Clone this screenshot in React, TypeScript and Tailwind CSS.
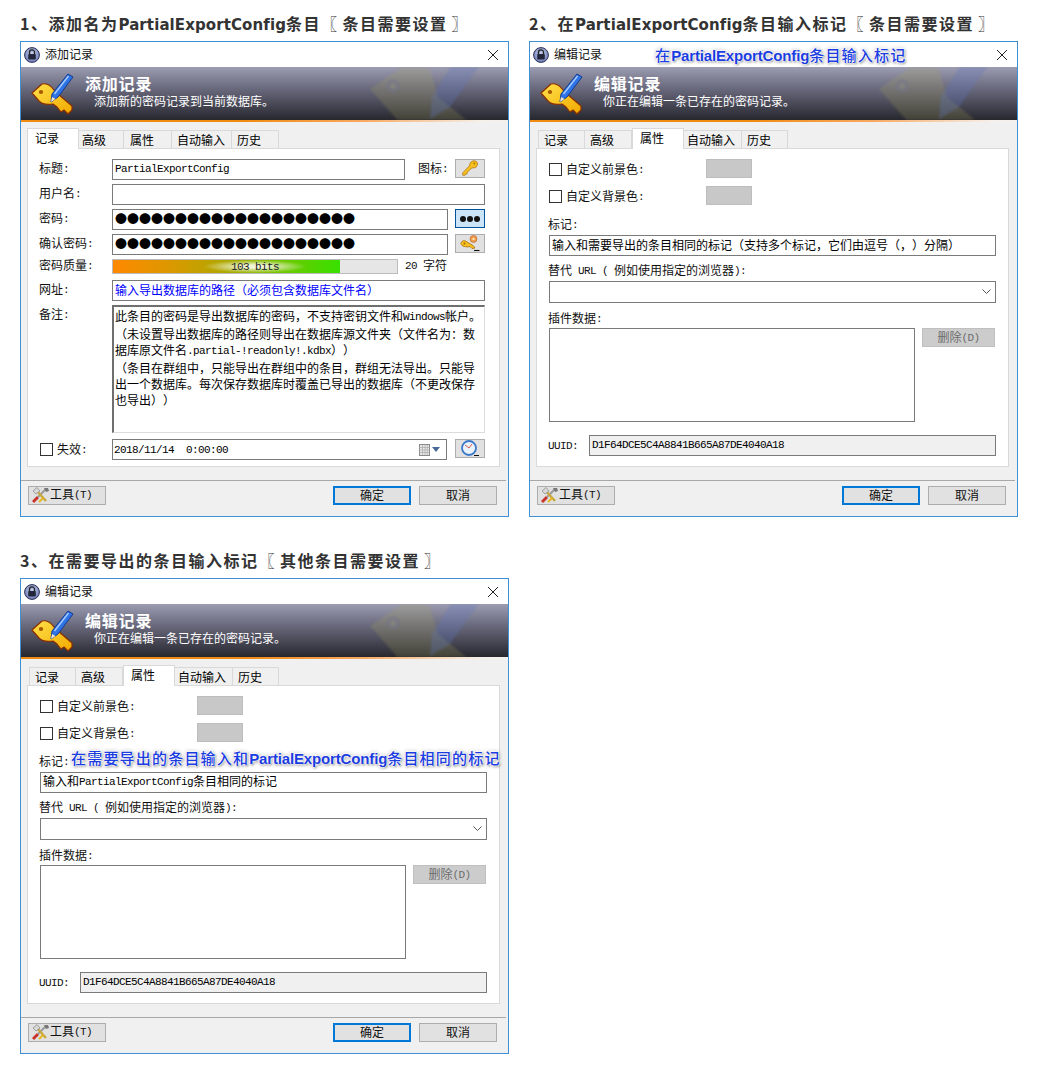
import React from "react";

const CJK = "font-['Noto_Sans_CJK_SC',sans-serif] [text-spacing-trim:space-all]";

function T({ text }: { text: string }) {
  const parts = text.split(/([\x20-\x7e]+)/).filter(Boolean);
  return (
    <span>
      {parts.map((p, i) =>
        /^[\x20-\x7e]+$/.test(p) ? (
          <span key={i} className="relative top-[-1px] font-['Liberation_Mono',monospace] text-[11px] tracking-[-0.6px] whitespace-pre">
            {p}
          </span>
        ) : (
          <span key={i}>{p}</span>
        )
      )}
    </span>
  );
}

function KeyPen() {
  return (
    <svg width={44} height={42} viewBox="0 0 44 42" className="shrink-0">
      <defs>
        <linearGradient id="ky" x1="0" y1="0" x2="1" y2="1">
          <stop offset="0" stopColor="#ffe14a" />
          <stop offset="1" stopColor="#f2a900" />
        </linearGradient>
      </defs>
      <path
        d="M1 20 L11 11 C15 10 20 12 23 17 L27 21 L41 33 L41 37 L37 41 L33 37 L30 39 L26 34 L22 31 C16 32 11 31 8 28 Z"
        fill="url(#ky)"
        stroke="#8a2f00"
        strokeWidth="1.2"
        strokeLinejoin="round"
      />
      <ellipse cx="10" cy="19" rx="2.2" ry="2" fill="#a85a00" />
      <path d="M37 1 L42 4 L27 24 L20 29 L21 21 Z" fill="#2f74e6" stroke="#123a90" strokeWidth="1" strokeLinejoin="round" />
      <path d="M37.5 3 L23.5 21" stroke="#a8ccff" strokeWidth="1.4" />
      <path d="M21 24 L20 29 L24.5 26 Z" fill="#f4e6c8" />
    </svg>
  );
}

function Watermark() {
  return (
    <svg width="139" height="53" viewBox="0 0 139 53" className="absolute left-[349px] top-0 blur-[1px]">
      <path d="M0 22 L38 -4 L60 2 L68 30 L100 56 L30 56 Z" fill="#a9a558" fillOpacity="0.22" />
      <circle cx="23" cy="19" r="6.5" fill="#74748e" fillOpacity="0.5" />
      <circle cx="23" cy="19" r="3" fill="#8f8d78" fillOpacity="0.5" />
      <path d="M82 -2 L110 -2 L80 40 L60 52 L62 30 Z" fill="#5f78bc" fillOpacity="0.3" />
    </svg>
  );
}

function LockIcon() {
  return (
    <svg width="16" height="16" viewBox="0 0 16 16" className="shrink-0">
      <defs>
        <radialGradient id="lk" cx="0.5" cy="0.4" r="0.7">
          <stop offset="0" stopColor="#c6d0ee" />
          <stop offset="1" stopColor="#5d6ea8" />
        </radialGradient>
      </defs>
      <circle cx="8" cy="8" r="7.4" fill="url(#lk)" stroke="#2a2f55" />
      <path d="M5.5 7 V5.4 a2.5 2.5 0 0 1 5 0 V7" fill="none" stroke="#222" strokeWidth="1.3" />
      <rect x="4.2" y="7" width="7.6" height="5.4" rx="0.8" fill="#23253a" />
    </svg>
  );
}

function SmallKey() {
  return (
    <svg width="16" height="16" viewBox="0 0 16 16">
      <path
        d="M15.5 4 C15.5 6.5 13.5 8 11 8 L10 7.8 L5 12.5 L5 14 L3.5 14 L2.5 15.5 L0.5 15 L1 12.5 L7.5 5.8 C7.5 3 9.5 0.8 12 0.8 C14 0.8 15.5 2 15.5 4 Z"
        fill="#f7c01e"
        stroke="#a86c0a"
        strokeWidth="0.7"
      />
      <circle cx="12.3" cy="3.6" r="1" fill="#b87a10" />
    </svg>
  );
}

function GenKey() {
  return (
    <svg width="20" height="17" viewBox="0 0 20 17">
      <path d="M1 8.5 C1 6.5 3 5 5.5 6 L13 10.5 L15 13 L12 13.5 L10 11.5 C7 12.5 1 11.5 1 8.5 Z" fill="#f7c01e" stroke="#a86c0a" strokeWidth="0.8" />
      <circle cx="4.5" cy="8.5" r="1" fill="#a86c0a" />
      <circle cx="13.5" cy="4" r="3.4" fill="#f0a050" stroke="#c06a30" strokeWidth="0.8" />
      <circle cx="13.5" cy="4" r="1.1" fill="#fff2c8" />
      <path d="M14 15.5 H19.5" stroke="#111" strokeWidth="1.1" />
    </svg>
  );
}

function ClockIcon() {
  return (
    <svg width="20" height="17" viewBox="0 0 20 17">
      <circle cx="9" cy="8" r="7" fill="#eaf2fc" stroke="#3c78c8" strokeWidth="1.8" />
      <path d="M9 8 L5 5 M9 8 L12 4" stroke="#d04a3c" strokeWidth="0.9" />
      <path d="M14 15.5 H19" stroke="#111" strokeWidth="1" />
    </svg>
  );
}

function ToolIcon() {
  return (
    <svg width="18" height="17" viewBox="0 0 18 17" className="shrink-0">
      <path d="M1 15 L6 10" stroke="#c8342c" strokeWidth="3" />
      <path d="M6 10 L14 2" stroke="#9a9a9a" strokeWidth="2" />
      <path d="M12 1 L16 1 L17 4 L14 5 Z" fill="#777" />
      <path d="M4 3 L14 14" stroke="#c8a83c" strokeWidth="2.4" />
      <path d="M1 4 L5 0.5 L8 4 L4 7 Z" fill="#d8d8d8" stroke="#777" strokeWidth="0.6" />
      <path d="M7 15 L11 11" stroke="#e6b820" strokeWidth="2" />
    </svg>
  );
}

function CalendarIcon() {
  return (
    <span className="flex items-center gap-[2px]">
      <svg width="11" height="12" viewBox="0 0 11 12">
        <rect x="0.5" y="0.5" width="10" height="11" fill="#e8e8e8" stroke="#8a8a8a" />
        <path d="M0.5 3.5 H10.5 M0.5 6 H10.5 M0.5 8.5 H10.5 M3.5 1 V11 M6 1 V11 M8.3 1 V11" stroke="#a9a9a9" strokeWidth="0.7" />
      </svg>
      <svg width="8" height="5" viewBox="0 0 8 5">
        <path d="M0 0 H8 L4 5 Z" fill="#4a6a96" />
      </svg>
    </span>
  );
}

function Btn({ children, className = "" }: { children: React.ReactNode; className?: string }) {
  return (
    <div className={`flex items-center justify-center h-[19px] border border-[#adadad] bg-[#e1e1e1] text-[12px] text-[#111] ${className}`}>
      {children}
    </div>
  );
}

function Input({ className = "", children }: { className?: string; children?: React.ReactNode }) {
  return (
    <div className={`flex items-center h-[21px] border border-[#7a7a7a] bg-white px-[2px] pb-[2px] text-[12px] whitespace-pre overflow-hidden ${className}`}>
      {children}
    </div>
  );
}

function Tabs({ active, widths, pads, ml }: { active: number; widths: number[]; pads: number[]; ml: number }) {
  const names = ["记录", "高级", "属性", "自动输入", "历史"];
  return (
    <div style={{ marginLeft: ml }} className="flex items-end h-[21px] relative z-10">
      {names.map((n, i) => (
        <div
          key={n}
          style={{ width: widths[i], paddingLeft: pads[i] }}
          className={
            i === active
              ? "h-[21px] bg-white border border-b-0 border-[#d9d9d9] text-[12px] leading-[18px] text-black shrink-0"
              : "h-[19px] bg-[#f0f0f0] border border-l-0 first:border-l border-[#d9d9d9] text-[12px] leading-[18px] text-black shrink-0"
          }
        >
          {n}
        </div>
      ))}
    </div>
  );
}

function Row({ label, children }: { label: string; children: React.ReactNode }) {
  return (
    <div className="flex items-center h-[21px] mb-[4px]">
      <div className="w-[73px] shrink-0 pb-[2px] text-[12px] text-[#111]">
        <T text={label} />
      </div>
      {children}
    </div>
  );
}

const DOTS = "●".repeat(20);

function EntryPanel() {
  return (
    <div className="pt-[10px] pl-[11px] pr-[14px]">
      <Row label="标题:">
        <Input className="w-[293px] text-black">
          <T text="PartialExportConfig" />
        </Input>
        <span className="ml-[13px] w-[37px] pb-[2px] text-[12px] text-[#111]">
          <T text="图标:" />
        </span>
        <Btn className="w-[30px] -mt-[3px]">
          <SmallKey />
        </Btn>
      </Row>
      <Row label="用户名:">
        <Input className="w-[373px]" />
      </Row>
      <Row label="密码:">
        <Input className="w-[336px] text-black leading-none">{DOTS}</Input>
        <Btn className="w-[30px] ml-[7px] -mt-[2px] gap-[1px] !bg-[#cce4f7] !border-[#005499]">
          <span className="w-[6px] h-[6px] rounded-full bg-[#111]" />
          <span className="w-[6px] h-[6px] rounded-full bg-[#111]" />
          <span className="w-[6px] h-[6px] rounded-full bg-[#111]" />
        </Btn>
      </Row>
      <Row label="确认密码:">
        <Input className="w-[336px] text-black leading-none">{DOTS}</Input>
        <Btn className="w-[30px] ml-[7px] -mt-[2px]">
          <GenKey />
        </Btn>
      </Row>
      <div className="flex items-center h-[15px] mb-[6px]">
        <div className="w-[73px] shrink-0 pb-[2px] text-[12px] text-[#111]">
          <T text="密码质量:" />
        </div>
        <div className="relative w-[286px] h-[15px] border border-[#bcbcbc] bg-[#e6e6e6]">
          <div className="h-full w-[227px] bg-[linear-gradient(90deg,#ff8800_0%,#dc9800_25%,#aea800_50%,#6fc800_75%,#38e000_100%)]" />
          <div className="absolute left-[90px] top-0 h-full w-[104px] bg-[radial-gradient(ellipse_at_center,#f0f4d8_15%,rgba(240,244,216,0)_70%)]" />
          <div className="absolute inset-0 flex items-center justify-center text-[12px] text-[#222]">
            <T text="103 bits" />
          </div>
        </div>
        <span className="ml-[7px] pb-[2px] text-[12px] text-[#111]">
          <T text="20 字符" />
        </span>
      </div>
      <Row label="网址:">
        <Input className="w-[373px] text-[#0000ff]">输入导出数据库的路径（必须包含数据库文件名）</Input>
      </Row>
      <div className="flex h-[128px] mb-[6px]">
        <div className="w-[73px] shrink-0 text-[12px] text-[#111]">
          <T text="备注:" />
        </div>
        <div className="w-[373px] h-[128px] border-t-2 border-l-2 border-[#6f6f6f] border-r border-b border-r-[#dcdcdc] border-b-[#dcdcdc] bg-white pl-[1px] pt-[1px] text-[12px] leading-[16px] text-black whitespace-pre">
          <div><T text="此条目的密码是导出数据库的密码，不支持密钥文件和Windows帐户。" /></div>
          <div>（未设置导出数据库的路径则导出在数据库源文件夹（文件名为：数</div>
          <div><T text="据库原文件名.partial-!readonly!.kdbx））" /></div>
          <div>（条目在群组中，只能导出在群组中的条目，群组无法导出。只能导</div>
          <div>出一个数据库。每次保存数据库时覆盖已导出的数据库（不更改保存</div>
          <div>也导出））</div>
        </div>
      </div>
      <div className="flex items-center h-[21px]">
        <div className="flex items-center w-[73px] shrink-0 pl-[1px]">
          <div className="w-[13px] h-[13px] border border-[#333] bg-white mr-[4px]" />
          <span className="text-[12px] text-[#111]">
            <T text="失效:" />
          </span>
        </div>
        <Input className="w-[335px] justify-between !pl-[1px] !pr-[6px] !pb-0 text-black">
          <T text="2018/11/14  0:00:00" />
          <CalendarIcon />
        </Input>
        <Btn className="w-[30px] ml-[8px] -mt-[3px]">
          <ClockIcon />
        </Btn>
      </div>
    </div>
  );
}

function Check({ label }: { label: string }) {
  return (
    <div className="flex items-center h-[19px] mb-[8px]">
      <div className="flex items-center w-[157px] shrink-0 pt-[2px]">
        <div className="w-[13px] h-[13px] border border-[#333] bg-white mr-[4px]" />
        <span className="text-[12px] text-[#111]">
          <T text={label} />
        </span>
      </div>
      <div className="w-[46px] h-[19px] bg-[#c8c8c8] border border-[#bdbdbd]" />
    </div>
  );
}

function PropsPanel({ tag }: { tag: string }) {
  return (
    <div className="pt-[10px] pl-[12px] pr-[12px]">
      <Check label="自定义前景色:" />
      <Check label="自定义背景色:" />
      <div className="h-[17px] mt-[10px] -ml-px mb-[3px] text-[12px] leading-[17px] text-[#111]">
        <T text="标记:" />
      </div>
      <Input className="w-[447px] text-black">
        <T text={tag} />
      </Input>
      <div className="h-[17px] mt-[5px] -ml-px mb-[3px] text-[12px] leading-[17px] text-[#111]">
        <T text="替代 URL ( 例如使用指定的浏览器):" />
      </div>
      <div className="flex items-center justify-end w-[447px] h-[22px] border border-[#7a7a7a] bg-white pr-[4px]">
        <svg width="9" height="6" viewBox="0 0 9 6">
          <path d="M0.5 0.5 L4.5 4.5 L8.5 0.5" fill="none" stroke="#555" />
        </svg>
      </div>
      <div className="h-[17px] mt-[6px] -ml-px mb-[2px] text-[12px] leading-[17px] text-[#111]">
        <T text="插件数据:" />
      </div>
      <div className="flex items-start">
        <div className="w-[366px] h-[94px] border border-[#7a7a7a] bg-white" />
        <div className="flex items-center justify-center w-[73px] h-[19px] ml-[7px] bg-[#cccccc] border border-[#bfbfbf] text-[12px] text-[#6d6d6d]">
          <T text="删除(D)" />
        </div>
      </div>
      <div className="flex items-center mt-[13px]">
        <div className="w-[40px] -ml-px mr-px text-[12px] text-[#111]">
          <T text="UUID:" />
        </div>
        <Input className="w-[407px] !bg-[#f0f0f0] text-black">
          <T text="D1F64DCE5C4A8841B665A87DE4040A18" />
        </Input>
      </div>
    </div>
  );
}

function Window({
  title,
  sub,
  active,
  widths,
  pads,
  tabLeft,
  children,
  overlay,
}: {
  title: string;
  sub: string;
  active: number;
  widths: number[];
  pads: number[];
  tabLeft: number;
  children: React.ReactNode;
  overlay?: React.ReactNode;
}) {
  return (
    <div className={`relative flex flex-col w-[489px] h-[476px] border border-[#3f8fd2] bg-[#f0f0f0] ${CJK}`}>
      <div className="flex items-center h-[25px] bg-white pl-[3px] pr-[9px] shrink-0">
        <LockIcon />
        <span className="ml-[5px] pb-[2px] text-[12px] text-[#111]">{title}</span>
        <svg width="12" height="12" viewBox="0 0 12 12" className="ml-auto">
          <path d="M1 1 L11 11 M11 1 L1 11" stroke="#222" strokeWidth="1" />
        </svg>
      </div>
      <div className="relative flex items-center h-[53px] shrink-0 overflow-hidden bg-[linear-gradient(180deg,#9c9cb2_0%,#6a6a7e_40%,#27272f_100%)] pl-[10px]">
        <Watermark />
        <KeyPen />
        <div className="relative ml-[10px] pb-[6px] text-white">
          <div className="text-[16px] font-bold leading-[20px] tracking-[0.8px]">{title}</div>
          <div className="pl-[9px] text-[12px] leading-[15px]">{sub}</div>
        </div>
      </div>
      <div className="h-[2px] shrink-0 bg-[linear-gradient(90deg,#f08a10_0%,#f08a10_45%,#f8a860_70%,#f6f0ea_95%)]" />
      <div className="pt-[6px] shrink-0">
        <Tabs active={active} widths={widths} pads={pads} ml={tabLeft} />
        <div className="ml-[6px] mr-[8px] h-[319px] -mt-px border border-[#d9d9d9] bg-white">{children}</div>
      </div>
      <div className="h-px mt-[13px] mr-[2px] bg-[#a8a8a8] shrink-0" />
      <div className="flex items-center pt-[5px] pl-[7px]">
        <Btn className="w-[78px] !justify-start pl-[3px] pb-[1px]">
          <ToolIcon />
          <T text="工具(T)" />
        </Btn>
        <Btn className="w-[78px] ml-auto pb-[1px] !border-2 !border-[#0078d7]">确定</Btn>
        <Btn className="w-[78px] ml-[8px] mr-[11px] pb-[1px]">取消</Btn>
      </div>
      {overlay}
    </div>
  );
}

function Heading({ children }: { children: React.ReactNode }) {
  return (
    <h2 className={`h-[41px] pt-[11px] text-[16px] leading-[24px] font-bold text-[#333] tracking-[1.5px] whitespace-pre ${CJK}`}>
      {children}
    </h2>
  );
}

function HL() {
  return <span className="font-['DejaVu_Sans',sans-serif] text-[15px] tracking-[0.1px]">PartialExportConfig</span>;
}

function Br({ side }: { side: "l" | "r" }) {
  return side === "l" ? <span className="mr-[4px]">〖</span> : <span className="ml-[4px]">〗</span>;
}

function Callout({ parts, className }: { parts: [string, boolean][]; className: string }) {
  return (
    <div
      className={`absolute whitespace-pre text-[15px] font-medium tracking-[1.2px] text-[#1a3ce0] [text-shadow:0_0_1px_#fff,0_0_2px_#fff,0_0_2px_#fff,0_0_3px_#fff,0_0_3px_#fff,1px_1px_2px_#555,0_0_4px_#888] ${CJK} ${className}`}
    >
      {parts.map(([s, latin], i) =>
        latin ? (
          <span key={i} className="font-['Liberation_Sans',sans-serif] font-bold tracking-[-0.15px]">
            {s}
          </span>
        ) : (
          <span key={i}>{s}</span>
        )
      )}
    </div>
  );
}

export default function App() {
  const w1 = [52, 45, 48, 60, 47];
  const p1 = [7, 3, 6, 5, 5];
  const wp = [47, 47, 52, 58, 46];
  const pp = [5, 5, 7, 3, 5];
  return (
    <div className="w-[1038px] h-[1074px] bg-white pl-[20px]">
      <div className="grid grid-cols-[489px_489px] gap-x-[20px] gap-y-[20px]">
        <section>
          <Heading>
            1、添加名为<HL />条目<Br side="l" />条目需要设置<Br side="r" />
          </Heading>
          <Window title="添加记录" sub="添加新的密码记录到当前数据库。" active={0} widths={w1} pads={p1} tabLeft={6}>
            <EntryPanel />
          </Window>
        </section>
        <section>
          <Heading>
            2、在<HL />条目输入标记<Br side="l" />条目需要设置<Br side="r" />
          </Heading>
          <Window
            title="编辑记录"
            sub="你正在编辑一条已存在的密码记录。"
            active={2}
            widths={wp}
            pads={pp}
            tabLeft={8}
            overlay={
              <Callout
                className="left-[125px] top-[2px]"
                parts={[["在", false], ["PartialExportConfig", true], ["条目输入标记", false]]}
              />
            }
          >
            <PropsPanel tag="输入和需要导出的条目相同的标记（支持多个标记，它们由逗号（，）分隔）" />
          </Window>
        </section>
        <section>
          <Heading>
            3、在需要导出的条目输入标记<Br side="l" />其他条目需要设置<Br side="r" />
          </Heading>
          <Window
            title="编辑记录"
            sub="你正在编辑一条已存在的密码记录。"
            active={2}
            widths={wp}
            pads={pp}
            tabLeft={8}
            overlay={
              <Callout
                className="left-[50px] top-[168px]"
                parts={[["在需要导出的条目输入和", false], ["PartialExportConfig", true], ["条目相同的标记", false]]}
              />
            }
          >
            <PropsPanel tag="输入和PartialExportConfig条目相同的标记" />
          </Window>
        </section>
      </div>
    </div>
  );
}
